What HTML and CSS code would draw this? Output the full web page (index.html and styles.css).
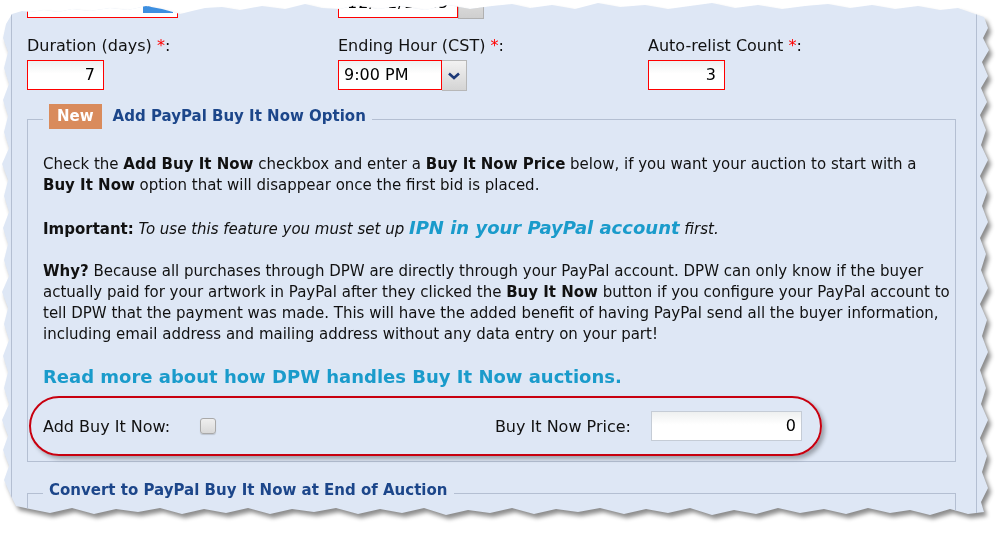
FILE: index.html
```html
<!DOCTYPE html>
<html lang="en">

<head>
    <meta charset="UTF-8">
    <title>Auction Settings</title>
    <link rel="stylesheet" href="styles.css">
</head>

<body>
    <div class="sheet">
        <div class="torn">
            <div class="page">

                <!-- row cut off by the torn edge -->
                <div class="field-grid top-row">
                    <div class="text-box date-box">
                        <svg class="cal-blue" width="30" height="12" viewBox="0 0 30 12">
                            <rect x="0" y="5" width="30" height="7" fill="#3d8fe0"/>
                            <rect x="5" y="1" width="4" height="5" fill="#3d8fe0"/>
                            <rect x="21" y="1" width="4" height="5" fill="#3d8fe0"/>
                            <rect x="12" y="3" width="5" height="3" fill="#8cc2f2"/>
                        </svg>
                    </div>
                    <div class="date-pair">
                        <div class="text-box time-box">12/21/2015</div>
                        <div class="cal-btn"></div>
                    </div>
                    <div></div>
                </div>

                <div class="field-grid">
                    <div class="field">
                        <label>Duration (days) <span class="req">*</span>:</label>
                        <div class="text-box num-box">7</div>
                    </div>
                    <div class="field">
                        <label>Ending Hour (CST) <span class="req">*</span>:</label>
                        <div class="select-wrap">
                            <div class="text-box select-box">9:00 PM</div>
                            <div class="select-btn">
                                <svg width="12" height="8" viewBox="0 0 12 8">
                                    <path d="M1 1.5 L6 6 L11 1.5" fill="none" stroke="#1d3a78" stroke-width="2.6"/>
                                </svg>
                            </div>
                        </div>
                    </div>
                    <div class="field">
                        <label>Auto-relist Count <span class="req">*</span>:</label>
                        <div class="text-box num-box">3</div>
                    </div>
                </div>

                <fieldset class="box">
                    <legend><span class="badge">New</span><span class="legend-title">Add PayPal Buy It Now Option</span></legend>

                    <p>Check the <b>Add Buy It Now</b> checkbox and enter a <b>Buy It Now Price</b> below, if you want your auction to start with a<br>
                        <b>Buy It Now</b> option that will disappear once the first bid is placed.</p>

                    <p><b>Important:</b> <i>To use this feature you must set up <a class="ipn" href="#">IPN in your PayPal account</a> first.</i></p>

                    <p><b>Why?</b> Because all purchases through DPW are directly through your PayPal account. DPW can only know if the buyer<br>
                        actually paid for your artwork in PayPal after they clicked the <b>Buy It Now</b> button if you configure your PayPal account to<br>
                        tell DPW that the payment was made. This will have the added benefit of having PayPal send all the buyer information,<br>
                        including email address and mailing address without any data entry on your part!</p>

                    <a class="read-more" href="#">Read more about how DPW handles Buy It Now auctions.</a>

                    <div class="bin-row">
                        <div class="bin-group">
                            <span>Add Buy It Now:</span>
                            <input type="checkbox" class="check">
                        </div>
                        <div class="bin-group price-group">
                            <span>Buy It Now Price:</span>
                            <div class="text-box price-box">0</div>
                        </div>
                    </div>
                </fieldset>

                <fieldset class="box second">
                    <legend><span class="legend-title">Convert to PayPal Buy It Now at End of Auction</span></legend>
                </fieldset>

            </div>
        </div>
    </div>
</body>

</html>
```

FILE: styles.css
```css
/* Reset some default styles */
* {
    margin: 0;
    padding: 0;
    box-sizing: border-box;
}

body {
    background-color: #fff;
    font-family: "DejaVu Sans", sans-serif;
    font-size: 15px;
    line-height: 21px;
    color: #111;
    overflow: hidden;
}

.sheet {
    width: 1000px;
    height: 533px;
    filter: drop-shadow(3px 4px 2px rgba(0, 0, 0, 0.45));
}

.torn {
    width: 995px;
    height: 525px;
    background-color: #dee7f5;
    overflow: hidden;
    clip-path: polygon(
        6px 24px, 12px 14px, 22px 11px, 30px 12px, 44px 10px, 58px 12px, 72px 9px, 90px 11px, 110px 8px, 128px 10px,
        146px 6px, 162px 9px, 180px 14px, 192px 11px, 205px 8px, 222px 7px, 240px 10px, 262px 6px, 285px 9px, 305px 4px,
        322px 8px, 340px 9px, 356px 5px, 378px 9px, 400px 6px, 425px 10px, 448px 5px, 470px 9px, 492px 6px, 512px 4px,
        530px 8px, 552px 5px, 575px 9px, 598px 3px, 620px 7px, 645px 5px, 668px 9px, 690px 6px, 712px 3px, 735px 8px,
        758px 5px, 782px 9px, 805px 6px, 828px 4px, 850px 8px, 872px 5px, 895px 9px, 918px 6px, 940px 10px, 958px 8px,
        972px 13px, 984px 17px,
        988px 28px, 983px 38px, 989px 50px, 982px 62px, 988px 76px, 981px 88px, 987px 102px, 980px 115px, 986px 130px,
        981px 145px, 988px 160px, 980px 176px, 987px 192px, 982px 206px, 988px 222px, 980px 238px, 986px 254px,
        981px 270px, 988px 288px, 980px 304px, 987px 320px, 982px 336px, 988px 352px, 980px 370px, 986px 388px,
        981px 404px, 988px 420px, 980px 438px, 987px 456px, 982px 472px, 988px 488px, 981px 502px, 984px 512px,
        968px 514px, 950px 509px, 930px 515px, 910px 510px, 890px 513px, 868px 508px, 846px 514px, 824px 509px,
        800px 513px, 778px 508px, 756px 514px, 734px 510px, 712px 515px, 690px 508px, 668px 513px, 646px 509px,
        624px 514px, 600px 508px, 578px 512px, 556px 509px, 534px 514px, 512px 508px, 490px 513px, 468px 510px,
        446px 515px, 424px 508px, 402px 513px, 380px 509px, 358px 514px, 336px 508px, 314px 512px, 292px 509px,
        270px 514px, 248px 508px, 226px 513px, 204px 509px, 182px 514px, 160px 508px, 138px 512px, 116px 509px,
        94px 514px, 72px 508px, 50px 513px, 30px 509px, 16px 506px,
        10px 494px, 4px 480px, 9px 466px, 3px 450px, 8px 436px, 2px 420px, 9px 404px, 4px 388px, 8px 372px,
        3px 356px, 9px 340px, 4px 324px, 8px 308px, 2px 292px, 9px 276px, 4px 260px, 8px 244px, 3px 228px,
        9px 212px, 4px 196px, 8px 180px, 2px 164px, 9px 148px, 4px 132px, 8px 116px, 3px 100px, 9px 84px,
        4px 68px, 8px 52px, 3px 38px
    );
}

.page {
    width: 966px;
    height: 540px;
    margin-left: 11px;
    padding: 0 20px 0 15px;
    border-left: 1px solid #b4bfd2;
    border-right: 1px solid #b4bfd2;
}

.field-grid {
    display: grid;
    grid-template-columns: 311px 310px 1fr;
}

.top-row {
    margin-top: -12px;
    margin-bottom: 14px;
}

.field label {
    display: block;
    padding-top: 2px;
    margin-bottom: 4px;
    font-size: 16px;
}

.req {
    color: #f00;
}

.text-box {
    height: 30px;
    line-height: 28px;
    padding: 0 8px;
    border: 1px solid #f00;
    background: linear-gradient(#eef0f0, #fff 45%);
    color: #000;
    font-size: 16px;
}

.date-box {
    width: 151px;
    display: flex;
    justify-content: flex-end;
    align-items: flex-end;
    padding: 0 4px 4px 0;
}

.date-pair {
    display: flex;
}

.time-box {
    width: 120px;
    letter-spacing: 1px;
}

.cal-btn {
    width: 26px;
    height: 31px;
    background: linear-gradient(#e6e6e6, #cfcfcf);
    border: 1px solid #b0b0b0;
}

.num-box {
    width: 77px;
    text-align: right;
}

.select-wrap {
    display: flex;
}

.select-box {
    width: 104px;
    padding-left: 5px;
}

.select-btn {
    width: 25px;
    height: 31px;
    display: flex;
    justify-content: center;
    align-items: center;
    background: linear-gradient(#f2f2f2, #d4d4d4);
    border: 1px solid #b7b7b7;
    border-left: none;
}

.box {
    min-width: 0;
    border: 1px solid #b4bfd2;
    margin-top: 13px;
    padding: 19px 15px 5px;
}

.box legend {
    display: flex;
    align-items: center;
    padding: 0 6px 6px;
}

.badge {
    display: inline-block;
    height: 25px;
    line-height: 25px;
    padding: 0 8px;
    background-color: #d98b5c;
    color: #fff;
    font-weight: bold;
}

.legend-title {
    margin-left: 11px;
    color: #1c468a;
    font-weight: bold;
}

.second .legend-title {
    margin-left: 0;
}

.second {
    margin-top: 18px;
    height: 40px;
}

p {
    margin-bottom: 21px;
    white-space: nowrap;
}

.ipn,
.read-more {
    color: #1a9bcb;
    font-weight: bold;
    font-size: 18px;
    text-decoration: none;
}

.read-more {
    display: block;
    margin-top: 20px;
    margin-bottom: 9px;
}

.bin-row {
    display: flex;
    align-items: center;
    justify-content: space-between;
    width: 793px;
    height: 60px;
    margin-left: -14px;
    padding: 0 18px 0 12px;
    border: 2px solid #c8000f;
    border-radius: 30px;
    box-shadow: 3px 3px 4px rgba(0, 0, 0, 0.3);
    font-size: 16px;
}

.bin-group {
    display: flex;
    align-items: center;
}

.check {
    appearance: none;
    width: 16px;
    height: 16px;
    margin-left: 30px;
    border: 1px solid #a9a9a9;
    border-radius: 3px;
    background: linear-gradient(#efefef, #d9d9d9);
    box-shadow: 0 1px 1px rgba(0, 0, 0, 0.15);
}

.price-group .text-box {
    margin-left: 20px;
}

.price-box {
    width: 151px;
    text-align: right;
    border-color: #c5ccd6;
    padding-right: 5px;
}
```
